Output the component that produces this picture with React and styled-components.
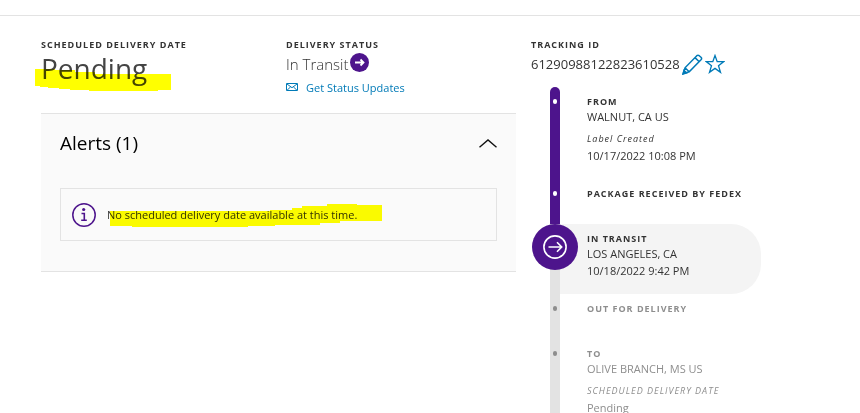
import React, { useState } from "react";
import styled, { createGlobalStyle } from "styled-components";

const Colors = {
  purple: "#4d148c",
  link: "#007ab7",
  text: "#333333",
  muted: "#8e8e8e",
  line: "#e3e3e3",
  panel: "#fafafa",
};

const GlobalStyle = createGlobalStyle`
  * {
    box-sizing: border-box;
  }
  html {
    scrollbar-width: none;
  }
  body {
    margin: 0;
    background: #ffffff;
    color: ${Colors.text};
    font-family: "Open Sans", "Noto Sans", sans-serif;
    font-size: 11px;
  }
  h2, p, ol {
    margin: 0;
    padding: 0;
  }
`;

const Page = styled.main`
  margin-top: 15px;
  padding: 22px 15px 0 41px;
  border-top: 1px solid ${Colors.line};
  display: grid;
  grid-template-columns: minmax(0, 475fr) minmax(0, 314fr);
  column-gap: 15px;
`;

const Summary = styled.div`
  display: grid;
  grid-template-columns: 245fr 230fr;
  height: 75px;
`;

const Label = styled.h2`
  font-size: 9px;
  font-weight: 700;
  line-height: 13px;
  letter-spacing: 1px;
  text-transform: uppercase;
`;

const DeliveryDate = styled.p`
  position: relative;
  width: fit-content;
  color: #444444;
  font-size: 28px;
  line-height: 34px;
`;

const Status = styled.p`
  display: flex;
  align-items: center;
  gap: 2px;
  height: 26px;
  font-size: 15px;
  font-weight: 300;

  svg {
    align-self: flex-start;
    margin-top: 2px;
  }
`;

const UpdatesLink = styled.a`
  display: flex;
  align-items: center;
  gap: 8px;
  height: 20px;
  color: ${Colors.link};
  font-size: 11px;
  text-decoration: none;
`;

const Marker = styled.svg`
  position: absolute;
  left: ${(props) => props.$left}px;
  top: ${(props) => props.$top}px;
  fill: #ffff00;
  mix-blend-mode: multiply;
  pointer-events: none;
`;

const Alerts = styled.section`
  height: 159px;
  padding: 0 19px;
  background: ${Colors.panel};
  border-top: 1px solid ${Colors.line};
  border-bottom: 1px solid ${Colors.line};
`;

const AlertsToggle = styled.button`
  display: flex;
  align-items: center;
  justify-content: space-between;
  width: 100%;
  height: 58px;
  padding: 0;
  border: 0;
  background: none;
  color: #000000;
  font: inherit;
  font-size: 19px;
  cursor: pointer;
`;

const AlertBox = styled.div`
  display: flex;
  align-items: center;
  gap: 11px;
  height: 53px;
  margin-top: 16px;
  padding: 0 11px;
  border: 1px solid ${Colors.line};
`;

const AlertText = styled.p`
  position: relative;
`;

const TrackingRow = styled.div`
  display: flex;
  align-items: center;
  gap: 2px;
  height: 26px;
  font-size: 13px;
`;

const IconButton = styled.button`
  display: flex;
  padding: 0;
  border: 0;
  background: none;
  color: ${Colors.link};
  cursor: pointer;
`;

const Timeline = styled.ol`
  margin: 10px 0 0 24px;
  list-style: none;
`;

const Step = styled.li`
  display: flex;
  max-width: 206px;
  min-height: 45px;
  border-radius: 0 30px 30px 0;
  background: ${(props) => (props.$state === "current" ? "#f4f4f4" : "none")};
  color: ${(props) => (props.$state === "ahead" ? Colors.muted : Colors.text)};
`;

const Rail = styled.div`
  display: flex;
  flex: none;
  justify-content: center;
  width: 46px;
  margin-left: -23px;
`;

const Bar = styled.div`
  display: flex;
  justify-content: center;
  width: 10px;
  padding-top: ${(props) => (props.$state === "current" ? 0 : 12)}px;
  border-radius: ${(props) => (props.$first ? "5px 5px 0 0" : 0)};
  background: ${(props) => (props.$state === "done" ? Colors.purple : "#e3e3e3")};
`;

const Dot = styled.span`
  width: 4px;
  height: 5px;
  border-radius: 2px;
  background: ${(props) => (props.$state === "done" ? "#ffffff" : Colors.muted)};
`;

const CurrentBadge = styled.span`
  display: flex;
  flex: none;
  align-items: center;
  justify-content: center;
  width: 46px;
  height: 46px;
  border-radius: 50%;
  background: ${Colors.purple};
`;

const StepBody = styled.div`
  padding: 8px 0 15px 9px;
  line-height: 17px;
  white-space: nowrap;
`;

const StepNote = styled.p`
  margin-top: 6px;
  font-size: 9px;
  font-style: italic;
  line-height: 16px;
  letter-spacing: 1px;
`;

const steps = [
  { title: "From", place: "WALNUT, CA US", note: "Label Created", time: "10/17/2022 10:08 PM", state: "done" },
  { title: "Package received by FedEx", state: "done" },
  { title: "In transit", place: "LOS ANGELES, CA", time: "10/18/2022 9:42 PM", state: "current" },
  { title: "Out for delivery", state: "ahead" },
  { title: "To", place: "OLIVE BRANCH, MS US", note: "SCHEDULED DELIVERY DATE", time: "Pending", state: "ahead" },
];

const TransitIcon = () => (
  <svg width="19" height="19" viewBox="0 0 19 19" fill="none" aria-hidden="true">
    <circle cx="9.5" cy="9.5" r="9.5" fill={Colors.purple} />
    <path d="M5 9.500h8M10.500 6.500l3 3-3 3" stroke="#ffffff" strokeWidth="1.8" />
  </svg>
);

const MailIcon = () => (
  <svg width="12" height="8" viewBox="0 0 12 8" fill="none" stroke={Colors.link} aria-hidden="true">
    <path d="M.5.5h11v7H.5zM1 1l5 3.700L11 1M1 7.300l3.600-3.400M11 7.300L7.400 3.900" />
  </svg>
);

const InfoIcon = () => (
  <svg width="24" height="24" viewBox="0 0 24 24" fill="none" stroke={Colors.purple} aria-hidden="true">
    <circle cx="12" cy="12" r="11.2" strokeWidth="1.5" />
    <circle cx="11.7" cy="6.5" r="1.6" fill={Colors.purple} stroke="none" />
    <path d="M9.500 10.500h2.800v6.700M9.200 17.300h5.600" strokeWidth="1.6" />
  </svg>
);

const ArrowIcon = () => (
  <svg width="24" height="24" viewBox="0 0 24 24" fill="none" stroke="#ffffff" strokeWidth="1.6" aria-hidden="true">
    <circle cx="12" cy="12" r="11.1" />
    <path d="M5.500 12h13M14 7.300l4.700 4.700-4.700 4.700" />
  </svg>
);

const ChevronIcon = () => (
  <svg width="18" height="9" viewBox="0 0 18 9" fill="none" stroke="#111111" strokeWidth="1.4" aria-hidden="true">
    <path d="M.5 8.200L9 1l8.500 7.200" />
  </svg>
);

const PencilIcon = () => (
  <svg width="21" height="21" viewBox="0 0 21 21" fill="none" stroke="currentColor" strokeWidth="1.5" aria-hidden="true">
    <path d="M1.200 19.600L3 13.800L14.800 1.700Q16 .7 17.200 1.700L19 3.300Q20.200 4.500 19 5.800L7.200 17.800zM3 13.800l4.200 4M13 3.600l4.200 4.200" />
    <path d="M1 20l1-3.500 2.500 2.400z" fill="currentColor" />
  </svg>
);

const StarIcon = () => (
  <svg width="20" height="20" viewBox="0 0 20 20" fill="none" stroke="currentColor" strokeWidth="1.3" aria-hidden="true">
    <path d="M10 1.500l2.200 6.100h6.600l-5.300 4.100 2 6.600L10 14.400l-5.500 3.900 2-6.600L1.200 7.600h6.600z" />
  </svg>
);

const TimelineStep = ({ step, first }) => (
  <Step $state={step.state}>
    <Rail>
      <Bar $state={step.state} $first={first}>
        {step.state === "current" ? (
          <CurrentBadge><ArrowIcon /></CurrentBadge>
        ) : (
          <Dot $state={step.state} />
        )}
      </Bar>
    </Rail>
    <StepBody>
      <Label>{step.title}</Label>
      {step.place && <p>{step.place}</p>}
      {step.note && <StepNote>{step.note}</StepNote>}
      {step.time && <p>{step.time}</p>}
    </StepBody>
  </Step>
);

const App = () => {
  const [open, setOpen] = useState(true);

  return (
    <>
      <GlobalStyle />
      <Page>
        <div>
          <Summary>
            <div>
              <Label>Scheduled delivery date</Label>
              <DeliveryDate>
                Pending
                <Marker $left={-6} $top={18} width="136" height="23" viewBox="0 0 136 23">
                  <path d="M0 0h20v1h20v2h20v2h76v16h-13v1H54v-1H35v-1H24v-1H13v-1H5v-1H0z" />
                </Marker>
              </DeliveryDate>
            </div>
            <div>
              <Label>Delivery status</Label>
              <Status>In Transit <TransitIcon /></Status>
              <UpdatesLink href="#updates"><MailIcon />Get Status Updates</UpdatesLink>
            </div>
          </Summary>
          <Alerts>
            <AlertsToggle type="button" aria-expanded={open} onClick={() => setOpen(!open)}>
              Alerts (1)
              <ChevronIcon />
            </AlertsToggle>
            {open && (
              <AlertBox>
                <InfoIcon />
                <AlertText>
                  No scheduled delivery date available at this time.
                  <Marker $left={3} $top={-3} width="272" height="24" viewBox="0 0 272 24">
                    <path d="M0 7h160V6h22V4h10V2h25V0h30v1h25v16h-42v2h-20v2h-45v1h-27v1H22v-1H0z" />
                  </Marker>
                </AlertText>
              </AlertBox>
            )}
          </Alerts>
        </div>
        <div>
          <Label>Tracking ID</Label>
          <TrackingRow>
            61290988122823610528
            <IconButton type="button" aria-label="Edit nickname"><PencilIcon /></IconButton>
            <IconButton type="button" aria-label="Add to watch list"><StarIcon /></IconButton>
          </TrackingRow>
          <Timeline>
            {steps.map((step, index) => (
              <TimelineStep key={step.title} step={step} first={index === 0} />
            ))}
          </Timeline>
        </div>
      </Page>
    </>
  );
};

export default App;
